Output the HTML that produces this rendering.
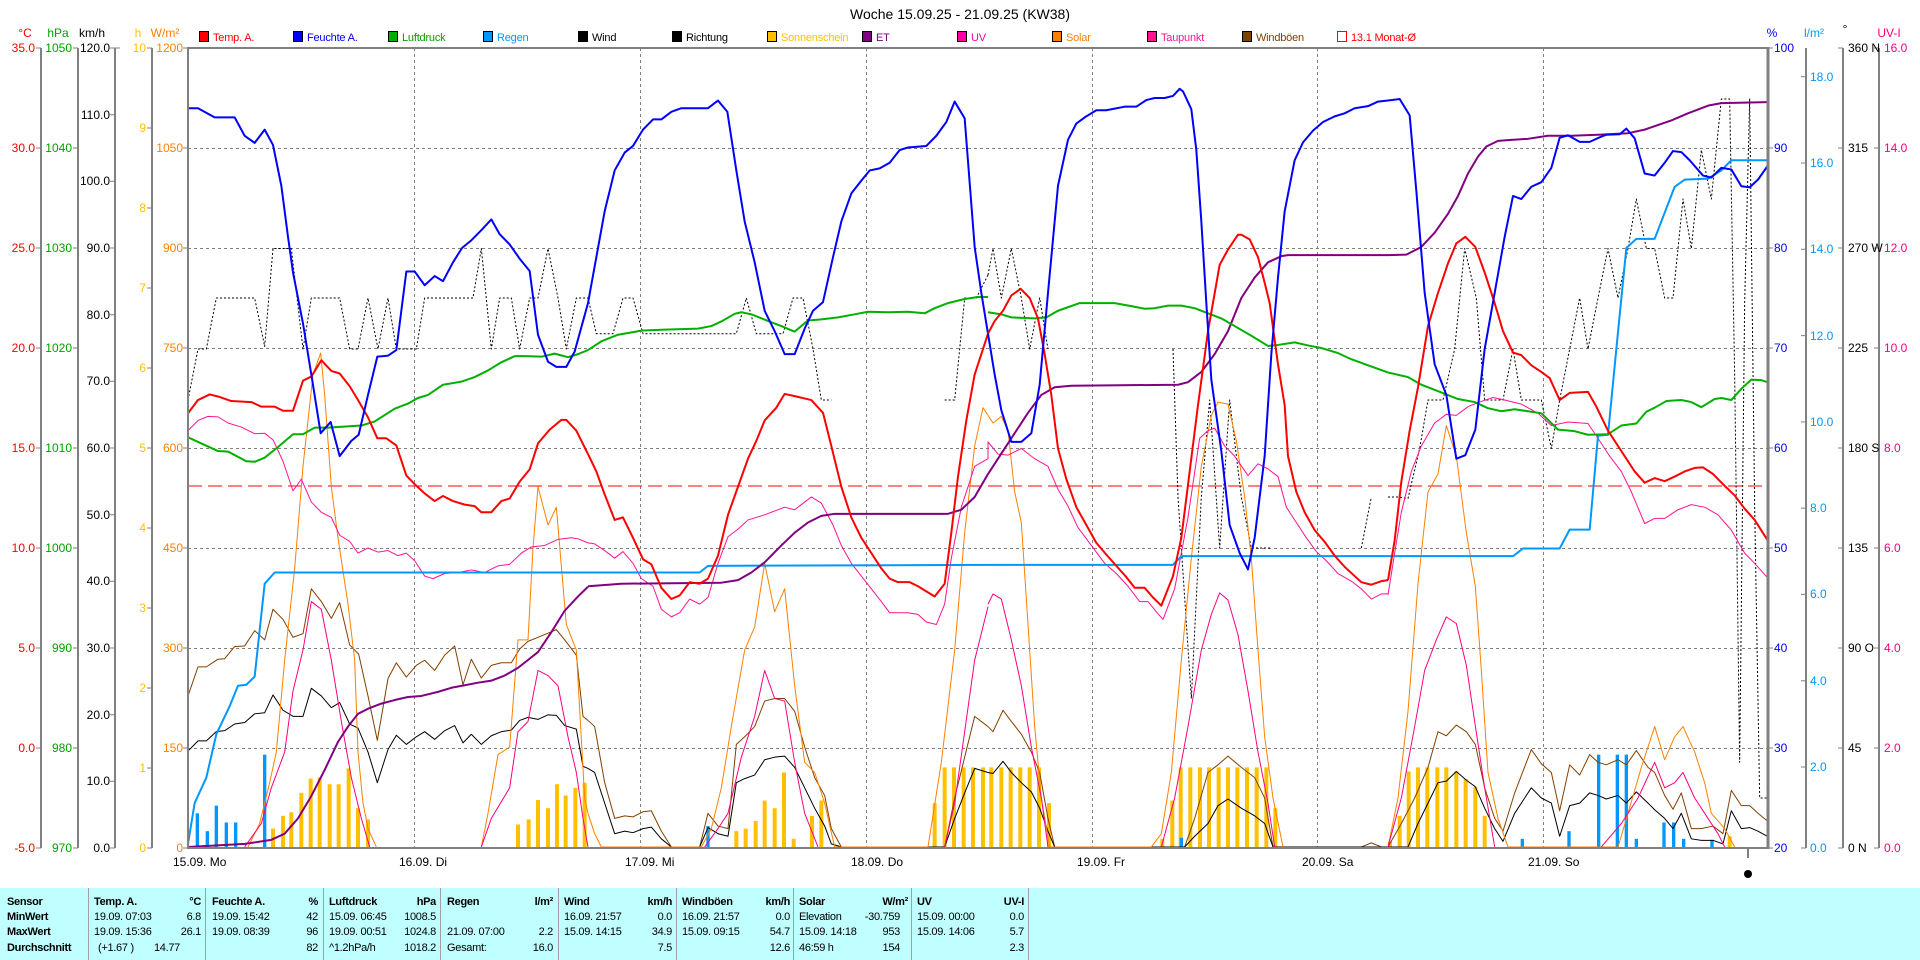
<!DOCTYPE html>
<html><head><meta charset="utf-8"><style>
html,body{margin:0;padding:0;background:#fff;width:1920px;height:960px;overflow:hidden}
svg{display:block}
text{font-family:"Liberation Sans",sans-serif;font-size:12px}
.t{font-family:"Liberation Sans Narrow","Liberation Sans",sans-serif;font-size:11px;letter-spacing:-0.3px}
.lg text{font-size:11px;letter-spacing:-0.2px}
.b{font-weight:bold}
</style></head><body>
<svg width="1920" height="960" viewBox="0 0 1920 960" xmlns="http://www.w3.org/2000/svg">
<defs><clipPath id="pc"><rect x="188" y="48" width="1580" height="800"/></clipPath></defs>
<text x="960" y="19" text-anchor="middle" style="font-size:14px">Woche 15.09.25 - 21.09.25 (KW38)</text>
<!-- legend -->
<g class="lg">
<rect x="199.5" y="31.5" width="9" height="10" fill="#f00" stroke="#000"/><text x="213" y="41" fill="#f00">Temp. A.</text>
<rect x="293.5" y="31.5" width="9" height="10" fill="#00f" stroke="#000"/><text x="307" y="41" fill="#00f">Feuchte A.</text>
<rect x="388.5" y="31.5" width="9" height="10" fill="#00b000" stroke="#000"/><text x="402" y="41" fill="#00a000">Luftdruck</text>
<rect x="483.5" y="31.5" width="9" height="10" fill="#0098ff" stroke="#000"/><text x="497" y="41" fill="#0098ff">Regen</text>
<rect x="578.5" y="31.5" width="9" height="10" fill="#000" stroke="#000"/><text x="592" y="41">Wind</text>
<rect x="672.5" y="31.5" width="9" height="10" fill="#000" stroke="#000"/><text x="686" y="41">Richtung</text>
<rect x="767.5" y="31.5" width="9" height="10" fill="#ffc000" stroke="#000"/><text x="781" y="41" fill="#ffc000">Sonnenschein</text>
<rect x="862.5" y="31.5" width="9" height="10" fill="#800080" stroke="#000"/><text x="876" y="41" fill="#800080">ET</text>
<rect x="957.5" y="31.5" width="9" height="10" fill="#ff00a0" stroke="#000"/><text x="971" y="41" fill="#ff00a0">UV</text>
<rect x="1052.5" y="31.5" width="9" height="10" fill="#ff8000" stroke="#000"/><text x="1066" y="41" fill="#ff8000">Solar</text>
<rect x="1147.5" y="31.5" width="9" height="10" fill="#ff1493" stroke="#000"/><text x="1161" y="41" fill="#ff1493">Taupunkt</text>
<rect x="1242.5" y="31.5" width="9" height="10" fill="#804000" stroke="#000"/><text x="1256" y="41" fill="#804000">Windböen</text>
<rect x="1337.5" y="31.5" width="9" height="10" fill="#fff" stroke="#f00"/><text x="1351" y="41" fill="#f00">13.1 Monat-Ø</text>
</g>
<!-- unit headers -->
<text x="25" y="37" fill="#f00" text-anchor="middle">°C</text>
<text x="58" y="37" fill="#00a000" text-anchor="middle">hPa</text>
<text x="92" y="37" text-anchor="middle">km/h</text>
<text x="138" y="37" fill="#ffc000" text-anchor="middle">h</text>
<text x="165" y="37" fill="#ff8000" text-anchor="middle">W/m²</text>
<text x="1772" y="37" fill="#00f" text-anchor="middle">%</text>
<text x="1814" y="37" fill="#0098ff" text-anchor="middle">l/m²</text>
<text x="1845" y="33" text-anchor="middle">°</text>
<text x="1889" y="37" fill="#ff0080" text-anchor="middle">UV-I</text>
<!-- axis lines -->
<g stroke="#808080" stroke-width="2">
<line x1="41" y1="48" x2="41" y2="848"/><line x1="78" y1="48" x2="78" y2="848"/>
<line x1="115" y1="48" x2="115" y2="848"/><line x1="152" y1="48" x2="152" y2="848"/>
<line x1="1806" y1="48" x2="1806" y2="848"/><line x1="1843" y1="48" x2="1843" y2="848"/><line x1="1879" y1="48" x2="1879" y2="848"/>
</g>
<g stroke="#808080" stroke-width="1">
<path d="M36 48h5M36 148h5M36 248h5M36 348h5M36 448h5M36 548h5M36 648h5M36 748h5M36 848h5"/>
<path d="M73 48h5M73 148h5M73 248h5M73 348h5M73 448h5M73 548h5M73 648h5M73 748h5M73 848h5"/>
<path d="M110 48h10M110 114.7h5M110 181.3h5M110 248h5M110 314.7h5M110 381.3h5M110 448h5M110 514.7h5M110 581.3h5M110 648h5M110 714.7h5M110 781.3h5M110 848h5"/>
<path d="M147 48h5M147 128h5M147 208h5M147 288h5M147 368h5M147 448h5M147 528h5M147 608h5M147 688h5M147 768h5M147 848h5"/>
<path d="M183 48h5M183 148h5M183 248h5M183 348h5M183 448h5M183 548h5M183 648h5M183 748h5M183 848h5"/>
<path d="M1768 48h5M1768 148h5M1768 248h5M1768 348h5M1768 448h5M1768 548h5M1768 648h5M1768 748h5M1768 848h5"/>
<path d="M1801 76.7h5M1801 163h5M1801 249.3h5M1801 335.6h5M1801 421.9h5M1801 508.1h5M1801 594.4h5M1801 680.7h5M1801 767h5M1801 848h5"/>
<path d="M1838 48h5M1838 148h5M1838 248h5M1838 348h5M1838 448h5M1838 548h5M1838 648h5M1838 748h5M1838 848h5"/>
<path d="M1874 48h5M1874 148h5M1874 248h5M1874 348h5M1874 448h5M1874 548h5M1874 648h5M1874 748h5M1874 848h5"/>
</g>
<!-- left labels -->
<g fill="#f00" text-anchor="end">
<text x="35" y="52">35.0</text><text x="35" y="152">30.0</text><text x="35" y="252">25.0</text><text x="35" y="352">20.0</text><text x="35" y="452">15.0</text><text x="35" y="552">10.0</text><text x="35" y="652">5.0</text><text x="35" y="752">0.0</text><text x="35" y="852">-5.0</text>
</g>
<g fill="#00a000" text-anchor="end">
<text x="72" y="52">1050</text><text x="72" y="152">1040</text><text x="72" y="252">1030</text><text x="72" y="352">1020</text><text x="72" y="452">1010</text><text x="72" y="552">1000</text><text x="72" y="652">990</text><text x="72" y="752">980</text><text x="72" y="852">970</text>
</g>
<g fill="#000" text-anchor="end">
<text x="110" y="52">120.0</text><text x="110" y="119">110.0</text><text x="110" y="185">100.0</text><text x="110" y="252">90.0</text><text x="110" y="319">80.0</text><text x="110" y="385">70.0</text><text x="110" y="452">60.0</text><text x="110" y="519">50.0</text><text x="110" y="585">40.0</text><text x="110" y="652">30.0</text><text x="110" y="719">20.0</text><text x="110" y="785">10.0</text><text x="110" y="852">0.0</text>
</g>
<g fill="#ffc000" text-anchor="end">
<text x="146" y="52">10</text><text x="146" y="132">9</text><text x="146" y="212">8</text><text x="146" y="292">7</text><text x="146" y="372">6</text><text x="146" y="452">5</text><text x="146" y="532">4</text><text x="146" y="612">3</text><text x="146" y="692">2</text><text x="146" y="772">1</text><text x="146" y="852">0</text>
</g>
<g fill="#ff8000" text-anchor="end">
<text x="183" y="52">1200</text><text x="183" y="152">1050</text><text x="183" y="252">900</text><text x="183" y="352">750</text><text x="183" y="452">600</text><text x="183" y="552">450</text><text x="183" y="652">300</text><text x="183" y="752">150</text><text x="183" y="852">0</text>
</g>
<!-- right labels -->
<g fill="#00f">
<text x="1774" y="52">100</text><text x="1774" y="152">90</text><text x="1774" y="252">80</text><text x="1774" y="352">70</text><text x="1774" y="452">60</text><text x="1774" y="552">50</text><text x="1774" y="652">40</text><text x="1774" y="752">30</text><text x="1774" y="852">20</text>
</g>
<g fill="#0098ff">
<text x="1810" y="81">18.0</text><text x="1810" y="167">16.0</text><text x="1810" y="253">14.0</text><text x="1810" y="340">12.0</text><text x="1810" y="426">10.0</text><text x="1810" y="512">8.0</text><text x="1810" y="598">6.0</text><text x="1810" y="685">4.0</text><text x="1810" y="771">2.0</text><text x="1810" y="852">0.0</text>
</g>
<g fill="#000">
<text x="1848" y="52">360 N</text><text x="1848" y="152">315</text><text x="1848" y="252">270 W</text><text x="1848" y="352">225</text><text x="1848" y="452">180 S</text><text x="1848" y="552">135</text><text x="1848" y="652">90 O</text><text x="1848" y="752">45</text><text x="1848" y="852">0 N</text>
</g>
<g fill="#ff0080">
<text x="1884" y="52">16.0</text><text x="1884" y="152">14.0</text><text x="1884" y="252">12.0</text><text x="1884" y="352">10.0</text><text x="1884" y="452">8.0</text><text x="1884" y="552">6.0</text><text x="1884" y="652">4.0</text><text x="1884" y="752">2.0</text><text x="1884" y="852">0.0</text>
</g>
<!-- grid -->
<g stroke="#808080" stroke-width="1" stroke-dasharray="3,3">
<path d="M188 148.5H1768M188 248.5H1768M188 348.5H1768M188 448.5H1768M188 548.5H1768M188 648.5H1768M188 748.5H1768"/>
<path d="M414.5 48V848M640.5 48V848M866.5 48V848M1092.5 48V848M1317.5 48V848M1543.5 48V848"/>
</g>
<line x1="188" y1="486" x2="1762" y2="486" stroke="#f00" stroke-width="1" stroke-dasharray="14,6"/>
<!-- date labels -->
<g fill="#000">
<text x="173" y="866">15.09.  Mo</text><text x="399" y="866">16.09.  Di</text><text x="625" y="866">17.09.  Mi</text><text x="851" y="866">18.09.  Do</text><text x="1077" y="866">19.09.  Fr</text><text x="1302" y="866">20.09.  Sa</text><text x="1528" y="866">21.09.  So</text>
</g>
<line x1="1748" y1="848" x2="1748" y2="858" stroke="#000"/>
<circle cx="1748" cy="874" r="4" fill="#000"/>

<g clip-path="url(#pc)" fill="none" stroke-linejoin="round">
<!-- G1 x0=188 -->
<g transform="translate(188,48) scale(0.33333,0.5102)">
<g fill="#ffc000" stroke="none">
<rect x="249" y="1530" width="12" height="40"/><rect x="279" y="1505" width="12" height="65"/><rect x="304" y="1498" width="12" height="72"/><rect x="334" y="1460" width="12" height="110"/><rect x="362" y="1432" width="12" height="138"/><rect x="389" y="1430" width="12" height="140"/><rect x="419" y="1443" width="12" height="127"/><rect x="446" y="1443" width="12" height="127"/><rect x="476" y="1412" width="12" height="158"/><rect x="504" y="1490" width="12" height="80"/><rect x="534" y="1512" width="12" height="58"/>
<rect x="984" y="1522" width="12" height="48"/><rect x="1016" y="1512" width="12" height="58"/><rect x="1044" y="1474" width="12" height="96"/><rect x="1074" y="1490" width="12" height="80"/><rect x="1101" y="1443" width="12" height="127"/><rect x="1127" y="1465" width="12" height="105"/><rect x="1156" y="1450" width="12" height="120"/><rect x="1184" y="1440" width="12" height="130"/>
</g>
<g fill="#0098ff" stroke="none">
<rect x="23" y="1500" width="10" height="70"/><rect x="53" y="1535" width="10" height="35"/><rect x="80" y="1485" width="10" height="85"/><rect x="110" y="1518" width="10" height="52"/><rect x="138" y="1518" width="10" height="52"/><rect x="225" y="1385" width="10" height="185"/>
</g>
<polyline vector-effect="non-scaling-stroke" stroke="#000" stroke-width="1" stroke-dasharray="2,2" points="0,690 30,590 55,590 85,490 200,490 230,585 255,393 310,393 345,590 370,490 455,490 485,590 510,590 540,490 570,590 600,490 625,590 685,590 710,490 855,490 880,393 910,590 935,490 970,490 995,590 1025,490 1050,490 1080,393 1110,490 1135,590 1165,490 1200,490"/>
<polyline vector-effect="non-scaling-stroke" stroke="#804000" stroke-width="1" points="0,1270 30,1213 55,1213 90,1198 110,1197 140,1173 170,1172 200,1142 230,1160 255,1100 285,1120 315,1155 345,1148 370,1060 400,1085 430,1118 455,1087 485,1170 512,1188 540,1270 568,1357 600,1236 625,1205 655,1233 685,1210 710,1200 740,1220 770,1190 800,1172 825,1248 850,1198 880,1235 910,1210 940,1205 970,1205 995,1178 1020,1163 1050,1155 1080,1147 1105,1140 1130,1160 1165,1190 1185,1310 1200,1318"/>
<polyline vector-effect="non-scaling-stroke" stroke="#000" stroke-width="1" points="0,1378 30,1358 55,1358 85,1340 110,1338 140,1325 170,1322 200,1305 230,1303 255,1268 285,1298 315,1310 345,1310 370,1255 400,1270 430,1293 455,1283 485,1325 510,1333 540,1380 568,1440 600,1375 625,1347 655,1365 685,1350 710,1340 740,1355 770,1338 800,1328 825,1362 850,1345 880,1365 910,1348 940,1340 970,1337 995,1318 1020,1312 1050,1316 1080,1307 1105,1308 1130,1328 1165,1335 1185,1408 1200,1412"/>
<polyline vector-effect="non-scaling-stroke" stroke="#ff8000" stroke-width="1" points="180,1566 215,1520 245,1440 265,1380 290,1200 320,1020 345,820 375,640 398,598 410,680 430,860 450,960 480,1090 500,1200 510,1380 525,1480 540,1530 565,1566"/>
<polyline vector-effect="non-scaling-stroke" stroke="#ff8000" stroke-width="1" points="880,1566 900,1500 930,1385 965,1370 990,1160 1020,1160 1035,980 1050,860 1080,935 1105,900 1135,1130 1165,1180 1190,1470 1200,1500"/>
<polyline vector-effect="non-scaling-stroke" stroke="#ff0080" stroke-width="1" points="170,1566 220,1520 250,1450 290,1380 315,1260 345,1180 370,1085 400,1100 430,1200 460,1320 490,1430 520,1510 545,1566"/>
<polyline vector-effect="non-scaling-stroke" stroke="#ff0080" stroke-width="1" points="880,1566 910,1510 965,1450 990,1340 1020,1320 1050,1220 1080,1230 1110,1250 1140,1350 1165,1420 1185,1510 1200,1566"/>
<polyline vector-effect="non-scaling-stroke" stroke="#ff1493" stroke-width="1" points="0,750 30,730 60,722 90,723 120,735 160,743 200,756 230,755 255,768 285,810 315,868 340,845 370,890 400,910 430,920 455,955 485,967 510,990 540,980 570,988 600,985 630,995 655,990 680,1005 710,1035 735,1040 770,1030 810,1028 850,1023 890,1028 930,1015 965,1012 1000,990 1030,978 1070,975 1110,963 1150,960 1170,962 1200,970"/>
<polyline vector-effect="non-scaling-stroke" stroke="#0098ff" stroke-width="2" points="0,1560 20,1480 55,1430 85,1345 125,1290 150,1250 175,1248 200,1232 230,1050 260,1028 1200,1028"/>
<polyline vector-effect="non-scaling-stroke" stroke="#800080" stroke-width="2" points="0,1566 170,1560 250,1552 290,1540 330,1510 370,1466 410,1415 450,1360 480,1330 510,1305 540,1295 580,1285 620,1278 660,1272 700,1270 750,1262 790,1254 830,1249 870,1244 910,1240 950,1230 990,1215 1050,1184 1090,1145 1130,1103 1170,1075 1200,1056"/>
<polyline vector-effect="non-scaling-stroke" stroke="#00b000" stroke-width="2" points="0,763 40,775 90,790 120,791 175,810 200,811 230,803 270,782 315,757 345,757 380,744 420,744 520,740 560,732 620,707 660,697 690,686 720,680 765,660 820,654 860,645 900,632 940,616 980,604 1010,604 1060,605 1100,599 1140,606 1170,600 1200,592"/>
<polyline vector-effect="non-scaling-stroke" stroke="#f00" stroke-width="2" points="0,716 30,690 65,679 90,683 130,692 190,694 220,703 260,703 285,711 315,711 345,652 370,644 400,612 430,633 455,638 485,663 510,690 540,724 568,765 595,765 625,779 655,838 680,855 710,873 740,888 765,878 795,888 830,895 860,898 880,910 910,910 940,888 965,883 995,850 1025,826 1050,775 1085,748 1120,729 1135,729 1165,750 1200,796"/>
<polyline vector-effect="non-scaling-stroke" stroke="#00f" stroke-width="2" points="0,118 30,118 80,136 140,136 170,172 200,186 230,160 255,190 280,270 300,370 315,440 345,540 370,640 398,755 428,733 455,800 490,770 512,758 540,680 568,605 600,603 625,592 655,438 680,438 710,465 740,447 765,457 795,420 822,392 850,377 880,357 910,336 935,365 965,385 995,413 1025,437 1050,562 1080,615 1105,625 1135,625 1160,595 1200,500"/>
</g>
<!-- G2 x0=588 -->
<g transform="translate(588,48) scale(0.33333,0.5102)">
<g fill="#ffc000" stroke="none">
<rect x="439" y="1535" width="12" height="35"/><rect x="467" y="1530" width="12" height="40"/><rect x="497" y="1515" width="12" height="55"/><rect x="524" y="1475" width="12" height="95"/><rect x="554" y="1490" width="12" height="80"/><rect x="582" y="1420" width="12" height="150"/><rect x="611" y="1550" width="12" height="20"/><rect x="666" y="1505" width="12" height="65"/><rect x="694" y="1475" width="12" height="95"/>
<rect x="1034" y="1480" width="12" height="90"/><rect x="1064" y="1410" width="12" height="160"/><rect x="1092" y="1410" width="12" height="160"/><rect x="1121" y="1410" width="12" height="160"/><rect x="1149" y="1410" width="12" height="160"/><rect x="1179" y="1410" width="12" height="160"/>
</g>
<rect x="355" y="1525" width="10" height="45" fill="#0098ff" stroke="none"/>
<polyline vector-effect="non-scaling-stroke" stroke="#000" stroke-width="1" stroke-dasharray="2,2" points="0,490 25,560 75,560 105,490 135,490 165,560 445,560 475,490 505,560 585,560 615,490 645,490 675,590 700,690 730,690"/>
<polyline vector-effect="non-scaling-stroke" stroke="#000" stroke-width="1" stroke-dasharray="2,2" points="1070,690 1100,690 1130,490 1165,490 1200,445"/>
<polyline vector-effect="non-scaling-stroke" stroke="#804000" stroke-width="1" points="0,1318 20,1330 50,1440 80,1510 110,1505 135,1507 165,1497 190,1495 220,1535 250,1566 335,1566 360,1500 390,1525 420,1530 445,1365 470,1350 500,1330 530,1280 560,1275 590,1275 620,1300 650,1370 680,1430 710,1465 730,1530 760,1566 1070,1566 1100,1470 1130,1390 1160,1310 1200,1330"/>
<polyline vector-effect="non-scaling-stroke" stroke="#000" stroke-width="1" points="0,1412 20,1420 50,1480 80,1540 110,1535 135,1538 165,1530 190,1527 220,1550 250,1566 335,1566 360,1528 390,1540 420,1545 445,1440 470,1432 500,1425 530,1395 560,1390 590,1388 620,1410 650,1450 680,1490 710,1525 730,1560 760,1566 1070,1566 1100,1510 1130,1460 1160,1412 1200,1420"/>
<polyline vector-effect="non-scaling-stroke" stroke="#ff8000" stroke-width="1" points="0,1500 20,1540 40,1566 340,1566 370,1530 400,1450 430,1330 470,1180 500,1135 530,1010 560,1105 590,1060 620,1250 650,1400 680,1420 710,1480 740,1566 1020,1566 1060,1400 1100,1180 1130,950 1160,780 1185,705 1200,720"/>
<polyline vector-effect="non-scaling-stroke" stroke="#ff0080" stroke-width="1" points="350,1566 390,1530 420,1500 460,1390 500,1310 530,1220 560,1275 590,1280 620,1400 650,1500 690,1566"/>
<polyline vector-effect="non-scaling-stroke" stroke="#ff0080" stroke-width="1" points="1070,1566 1100,1480 1160,1200 1200,1095"/>
<polyline vector-effect="non-scaling-stroke" stroke="#ff1493" stroke-width="1" points="0,970 20,972 50,985 80,1000 105,987 135,1010 160,1040 195,1055 220,1100 250,1115 275,1107 305,1080 335,1090 360,1077 390,1010 420,958 450,943 480,925 530,915 590,900 620,905 650,890 670,880 700,892 735,935 760,975 790,1010 820,1035 850,1060 880,1085 905,1107 960,1107 990,1110 1015,1125 1045,1130 1070,1090 1090,1000 1120,900 1160,820 1200,805"/>
<polyline vector-effect="non-scaling-stroke" stroke="#0098ff" stroke-width="2" points="0,1028 335,1028 360,1015 1200,1013"/>
<polyline vector-effect="non-scaling-stroke" stroke="#800080" stroke-width="2" points="0,1055 100,1050 400,1048 450,1043 490,1028 530,1008 580,975 620,950 660,930 700,917 740,913 1080,913 1120,905 1160,880 1200,835"/>
<polyline vector-effect="non-scaling-stroke" stroke="#00b000" stroke-width="2" points="0,592 40,575 90,562 160,554 230,552 330,550 370,545 400,536 440,521 460,518 490,522 540,535 580,545 620,556 660,534 700,532 750,528 800,522 840,517 900,518 960,517 1010,520 1040,510 1080,500 1130,492 1170,488 1200,488"/>
<polyline vector-effect="non-scaling-stroke" stroke="#f00" stroke-width="2" points="0,796 25,830 50,875 80,925 105,920 135,960 165,1002 190,1012 220,1058 250,1080 275,1073 305,1047 335,1050 360,1040 390,995 420,915 450,860 480,805 505,770 530,730 565,705 590,678 625,683 670,690 705,715 730,780 760,860 790,920 820,960 850,990 880,1020 905,1040 930,1047 965,1047 990,1055 1015,1065 1040,1075 1070,1050 1090,950 1110,840 1135,730 1160,640 1200,560"/>
<polyline vector-effect="non-scaling-stroke" stroke="#00f" stroke-width="2" points="0,500 25,410 50,320 80,240 110,205 135,192 165,160 195,140 220,140 250,125 280,118 360,118 390,103 418,125 445,240 470,340 500,420 530,515 560,555 590,600 620,600 650,550 675,515 705,498 735,410 760,340 790,285 820,260 845,240 875,236 905,225 935,200 960,195 1015,192 1045,172 1075,145 1100,105 1130,138 1160,390 1180,480 1200,560"/>
</g>
<!-- G3 x0=988 -->
<g transform="translate(988,48) scale(0.33333,0.5102)">
<g fill="#ffc000" stroke="none">
<rect x="4" y="1410" width="12" height="160"/><rect x="34" y="1410" width="12" height="160"/><rect x="62" y="1410" width="12" height="160"/><rect x="91" y="1410" width="12" height="160"/><rect x="119" y="1410" width="12" height="160"/><rect x="147" y="1410" width="12" height="160"/><rect x="177" y="1480" width="12" height="90"/>
<rect x="517" y="1550" width="12" height="20"/><rect x="547" y="1475" width="12" height="95"/><rect x="572" y="1410" width="12" height="160"/><rect x="601" y="1410" width="12" height="160"/><rect x="630" y="1410" width="12" height="160"/><rect x="657" y="1410" width="12" height="160"/><rect x="686" y="1410" width="12" height="160"/><rect x="714" y="1410" width="12" height="160"/><rect x="742" y="1410" width="12" height="160"/><rect x="771" y="1410" width="12" height="160"/><rect x="800" y="1410" width="12" height="160"/><rect x="829" y="1410" width="12" height="160"/><rect x="856" y="1490" width="12" height="80"/>
</g>
<rect x="575" y="1548" width="10" height="22" fill="#0098ff" stroke="none"/>
<polyline vector-effect="non-scaling-stroke" stroke="#000" stroke-width="1" stroke-dasharray="2,2" points="0,445 15,393 40,490 70,393 100,490 125,590 155,490 180,590"/>
<polyline vector-effect="non-scaling-stroke" stroke="#000" stroke-width="1" stroke-dasharray="2,2" points="555,590 570,880 610,1275 640,880 665,690 695,980 725,690 760,880 790,980 850,980"/>
<polyline vector-effect="non-scaling-stroke" stroke="#000" stroke-width="1" stroke-dasharray="2,2" points="1120,980 1150,880"/>
<polyline vector-effect="non-scaling-stroke" stroke="#804000" stroke-width="1" points="0,1330 15,1340 45,1298 70,1320 100,1345 130,1380 155,1420 180,1510 200,1566 590,1566 620,1510 660,1420 690,1405 720,1388 760,1410 800,1430 830,1470 855,1566 1120,1566 1150,1558 1180,1566 1200,1566"/>
<polyline vector-effect="non-scaling-stroke" stroke="#000" stroke-width="1" points="0,1420 15,1422 45,1398 70,1420 100,1440 130,1458 155,1490 180,1535 200,1566 590,1566 620,1545 660,1520 690,1485 720,1472 760,1490 800,1505 830,1520 855,1566 1200,1566"/>
<polyline vector-effect="non-scaling-stroke" stroke="#ff8000" stroke-width="1" points="0,720 15,735 40,722 60,750 80,870 100,930 120,1130 140,1330 160,1470 185,1566 490,1566 520,1540 550,1420 580,1200 610,1000 640,820 670,720 690,694 720,698 745,770 770,880 790,1000 810,1180 830,1350 855,1470 885,1566"/>
<polyline vector-effect="non-scaling-stroke" stroke="#ff0080" stroke-width="1" points="0,1090 15,1070 40,1080 70,1160 100,1250 130,1370 160,1470 180,1566"/>
<polyline vector-effect="non-scaling-stroke" stroke="#ff0080" stroke-width="1" points="520,1566 560,1470 600,1330 640,1180 670,1110 695,1068 720,1082 750,1150 780,1260 810,1380 840,1480 860,1566"/>
<polyline vector-effect="non-scaling-stroke" stroke="#ff1493" stroke-width="1" points="0,805 0,772 30,796 60,798 100,785 140,805 180,820 210,865 240,898 270,940 310,975 350,1010 385,1030 420,1055 455,1085 480,1085 505,1105 525,1120 560,1060 600,920 635,765 660,750 680,745 710,780 740,800 780,838 810,815 840,825 870,840 895,900 925,930 955,960 985,987 1015,1005 1050,1030 1090,1045 1120,1060 1150,1080 1180,1070 1200,1070"/>
<polyline vector-effect="non-scaling-stroke" stroke="#0098ff" stroke-width="2" points="0,1013 555,1013 580,996 1200,996"/>
<polyline vector-effect="non-scaling-stroke" stroke="#800080" stroke-width="2" points="0,835 40,795 80,755 120,715 160,680 200,665 250,662 570,660 600,655 640,635 680,600 720,555 760,490 800,450 840,420 880,408 900,406 1200,406"/>
<polyline vector-effect="non-scaling-stroke" stroke="#00b000" stroke-width="2" points="0,518 40,522 70,528 140,530 175,528 210,515 275,500 380,500 430,506 470,511 500,510 540,505 580,505 620,510 660,520 700,530 740,545 790,564 840,584 870,582 920,577 960,583 1000,588 1050,598 1090,610 1140,622 1200,636"/>
<polyline vector-effect="non-scaling-stroke" stroke="#f00" stroke-width="2" points="0,560 20,535 45,515 70,485 98,472 125,490 150,530 170,600 190,680 210,785 235,845 265,900 295,935 325,970 355,993 385,1015 415,1037 440,1058 470,1058 495,1077 520,1093 555,1035 580,960 605,830 630,700 660,555 695,425 720,395 750,366 760,366 785,375 810,410 830,460 845,500 870,620 890,700 900,800 925,870 950,910 980,945 1010,968 1040,995 1070,1017 1100,1035 1120,1047 1150,1052 1180,1045 1200,1043"/>
<polyline vector-effect="non-scaling-stroke" stroke="#00f" stroke-width="2" points="0,560 20,640 40,710 70,772 100,772 130,755 155,660 180,480 210,270 240,180 265,148 290,136 325,122 355,122 410,115 445,115 475,102 500,98 530,98 555,94 575,80 585,85 610,120 625,200 640,340 655,500 670,650 700,790 725,935 755,990 780,1022 800,960 830,800 850,600 870,450 890,320 920,220 945,185 975,162 1005,145 1040,134 1070,128 1100,118 1140,114 1170,105 1200,103"/>
</g>
<!-- G4 x0=1388 -->
<g transform="translate(1388,48) scale(0.33333,0.5102)">
<g fill="#ffc000" stroke="none">
<rect x="0" y="1555" width="12" height="15"/><rect x="29" y="1505" width="12" height="65"/><rect x="56" y="1418" width="12" height="152"/><rect x="84" y="1410" width="12" height="160"/><rect x="112" y="1410" width="12" height="160"/><rect x="142" y="1410" width="12" height="160"/><rect x="169" y="1410" width="12" height="160"/><rect x="199" y="1418" width="12" height="152"/><rect x="227" y="1433" width="12" height="137"/><rect x="256" y="1448" width="12" height="122"/><rect x="284" y="1505" width="12" height="65"/><rect x="1019" y="1545" width="12" height="25"/>
</g>
<g fill="#0098ff" stroke="none">
<rect x="398" y="1550" width="10" height="20"/><rect x="538" y="1535" width="10" height="35"/><rect x="627" y="1385" width="10" height="185"/><rect x="683" y="1385" width="10" height="185"/><rect x="710" y="1385" width="10" height="185"/><rect x="740" y="1550" width="10" height="20"/><rect x="823" y="1518" width="10" height="52"/><rect x="852" y="1518" width="10" height="52"/><rect x="882" y="1550" width="10" height="20"/><rect x="967" y="1552" width="10" height="18"/>
</g>
<polyline vector-effect="non-scaling-stroke" stroke="#000" stroke-width="1" stroke-dasharray="2,2" points="0,880 30,880 60,883 95,785 120,690 165,690 200,590 230,393 265,490 290,690 345,690 375,590 400,690 460,690 490,785 515,690 545,590 575,490 600,590 630,490 660,393 690,490 720,393 745,296 775,393 800,393 830,490 855,490 885,296 910,393 940,200 970,296 1000,100 1025,100 1040,640 1055,1400 1070,500 1085,100 1100,900 1115,1470 1138,1470"/>
<polyline vector-effect="non-scaling-stroke" stroke="#804000" stroke-width="1" points="0,1566 40,1520 80,1470 120,1410 150,1340 175,1348 205,1327 235,1340 262,1365 290,1450 320,1510 345,1535 380,1460 430,1375 460,1403 490,1420 515,1495 545,1405 575,1425 605,1385 630,1400 655,1405 690,1395 715,1405 745,1377 780,1410 800,1420 830,1465 855,1492 880,1460 910,1530 940,1530 975,1525 1005,1540 1030,1455 1060,1485 1085,1485 1110,1500 1138,1515"/>
<polyline vector-effect="non-scaling-stroke" stroke="#000" stroke-width="1" points="0,1566 60,1566 90,1520 120,1480 150,1440 175,1437 205,1418 235,1435 262,1448 290,1490 320,1530 345,1555 380,1500 430,1450 460,1470 490,1480 515,1545 545,1485 575,1480 605,1460 630,1465 655,1472 690,1465 715,1480 745,1458 780,1480 800,1493 830,1510 855,1530 880,1500 910,1550 940,1553 975,1553 1005,1560 1030,1495 1060,1530 1085,1528 1110,1535 1138,1545"/>
<polyline vector-effect="non-scaling-stroke" stroke="#ff8000" stroke-width="1" points="0,1566 30,1470 60,1300 90,1050 120,870 150,835 175,740 205,800 235,950 262,1055 280,1220 300,1420 330,1510 360,1566 690,1566 720,1500 760,1410 800,1330 830,1395 860,1350 885,1330 920,1380 950,1440 970,1500 1010,1530 1040,1566"/>
<polyline vector-effect="non-scaling-stroke" stroke="#ff0080" stroke-width="1" points="0,1566 40,1470 80,1330 110,1220 145,1160 175,1115 205,1128 235,1210 260,1320 290,1450 320,1566"/>
<polyline vector-effect="non-scaling-stroke" stroke="#ff0080" stroke-width="1" points="640,1566 700,1520 750,1470 800,1400 830,1450 860,1440 885,1420 920,1470 950,1500 990,1540 1010,1566"/>
<polyline vector-effect="non-scaling-stroke" stroke="#ff1493" stroke-width="1" points="0,1072 20,990 40,910 70,830 100,780 140,735 175,718 205,720 240,703 270,695 315,685 350,690 400,698 450,716 490,740 540,733 600,736 635,770 665,800 700,830 730,870 770,932 800,922 830,922 870,905 910,895 950,900 990,915 1030,945 1070,990 1100,1010 1138,1038"/>
<polyline vector-effect="non-scaling-stroke" stroke="#0098ff" stroke-width="2" points="0,996 375,996 405,981 515,981 545,944 605,944 630,760 660,758 685,590 715,392 745,374 800,374 860,272 890,258 960,256 1000,240 1030,220 1138,220"/>
<polyline vector-effect="non-scaling-stroke" stroke="#800080" stroke-width="2" points="0,406 55,405 100,390 140,362 180,325 210,290 240,246 270,213 295,193 330,182 370,180 420,178 480,172 550,172 630,170 720,167 770,160 850,142 900,128 960,113 1000,108 1138,106"/>
<polyline vector-effect="non-scaling-stroke" stroke="#00b000" stroke-width="2" points="0,636 60,645 100,660 160,675 210,688 260,694 300,706 340,712 380,708 420,712 460,716 510,748 560,751 600,758 660,757 700,740 745,736 775,713 800,705 835,692 880,690 910,694 940,704 980,688 1000,686 1030,690 1060,668 1090,650 1120,651 1138,655"/>
<polyline vector-effect="non-scaling-stroke" stroke="#f00" stroke-width="2" points="0,1043 20,965 40,850 65,750 90,665 120,545 150,480 180,422 205,383 232,370 262,390 290,440 320,500 345,555 375,597 400,602 430,622 460,635 485,647 515,690 545,676 600,674 625,703 660,750 700,790 740,830 770,852 800,843 830,849 860,840 890,830 920,823 945,822 975,835 1005,855 1040,877 1070,903 1100,925 1138,964"/>
<polyline vector-effect="non-scaling-stroke" stroke="#00f" stroke-width="2" points="0,103 35,100 65,132 85,280 110,480 140,620 175,680 205,805 232,798 262,748 290,590 320,480 350,370 375,290 400,296 430,272 460,263 490,235 515,176 540,171 575,184 605,184 635,175 655,170 695,169 715,158 740,177 770,246 800,250 830,225 855,202 880,204 905,220 945,250 970,254 1000,235 1030,238 1060,271 1085,273 1110,258 1138,232"/>
</g>
</g>
<!-- plot border -->
<g stroke="#808080">
<line x1="187" y1="48" x2="1769" y2="48" stroke-width="2"/>
<line x1="188" y1="47" x2="188" y2="849" stroke-width="2"/>
<line x1="1768" y1="47" x2="1768" y2="849" stroke-width="3"/>
<line x1="187" y1="848" x2="1769" y2="848" stroke-width="2"/>
</g>
<!-- table -->
<rect x="0" y="888" width="1920" height="72" fill="#c0ffff"/>
<g stroke="#a0a0a0" stroke-width="1">
<path d="M88.5 888V960M205.5 888V960M323.5 888V960M440.5 888V960M558.5 888V960M676.5 888V960M793.5 888V960M911.5 888V960M1028.5 888V960"/>
</g>
<g class="t">
<text class="t b" x="7" y="905">Sensor</text><text class="t b" x="7" y="920">MinWert</text><text class="t b" x="7" y="935">MaxWert</text><text class="t b" x="7" y="951">Durchschnitt</text>
<text class="t b" x="94" y="905">Temp. A.</text><text class="t b" x="201" y="905" text-anchor="end">°C</text>
<text class="t" x="94" y="920">19.09.  07:03</text><text class="t" x="201" y="920" text-anchor="end">6.8</text>
<text class="t" x="94" y="935">19.09.  15:36</text><text class="t" x="201" y="935" text-anchor="end">26.1</text>
<text class="t" x="98" y="951">(+1.67 )</text><text class="t" x="180" y="951" text-anchor="end">14.77</text>
<text class="t b" x="212" y="905">Feuchte A.</text><text class="t b" x="318" y="905" text-anchor="end">%</text>
<text class="t" x="212" y="920">19.09.  15:42</text><text class="t" x="318" y="920" text-anchor="end">42</text>
<text class="t" x="212" y="935">19.09.  08:39</text><text class="t" x="318" y="935" text-anchor="end">96</text>
<text class="t" x="318" y="951" text-anchor="end">82</text>
<text class="t b" x="329" y="905">Luftdruck</text><text class="t b" x="436" y="905" text-anchor="end">hPa</text>
<text class="t" x="329" y="920">15.09.  06:45</text><text class="t" x="436" y="920" text-anchor="end">1008.5</text>
<text class="t" x="329" y="935">19.09.  00:51</text><text class="t" x="436" y="935" text-anchor="end">1024.8</text>
<text class="t" x="329" y="951">^1.2hPa/h</text><text class="t" x="436" y="951" text-anchor="end">1018.2</text>
<text class="t b" x="447" y="905">Regen</text><text class="t b" x="553" y="905" text-anchor="end">l/m²</text>
<text class="t" x="447" y="935">21.09.  07:00</text><text class="t" x="553" y="935" text-anchor="end">2.2</text>
<text class="t" x="447" y="951">Gesamt:</text><text class="t" x="553" y="951" text-anchor="end">16.0</text>
<text class="t b" x="564" y="905">Wind</text><text class="t b" x="672" y="905" text-anchor="end">km/h</text>
<text class="t" x="564" y="920">16.09.  21:57</text><text class="t" x="672" y="920" text-anchor="end">0.0</text>
<text class="t" x="564" y="935">15.09.  14:15</text><text class="t" x="672" y="935" text-anchor="end">34.9</text>
<text class="t" x="672" y="951" text-anchor="end">7.5</text>
<text class="t b" x="682" y="905">Windböen</text><text class="t b" x="790" y="905" text-anchor="end">km/h</text>
<text class="t" x="682" y="920">16.09.  21:57</text><text class="t" x="790" y="920" text-anchor="end">0.0</text>
<text class="t" x="682" y="935">15.09.  09:15</text><text class="t" x="790" y="935" text-anchor="end">54.7</text>
<text class="t" x="790" y="951" text-anchor="end">12.6</text>
<text class="t b" x="799" y="905">Solar</text><text class="t b" x="908" y="905" text-anchor="end">W/m²</text>
<text class="t" x="799" y="920">Elevation</text><text class="t" x="900" y="920" text-anchor="end">-30.759</text>
<text class="t" x="799" y="935">15.09.  14:18</text><text class="t" x="900" y="935" text-anchor="end">953</text>
<text class="t" x="799" y="951">46:59 h</text><text class="t" x="900" y="951" text-anchor="end">154</text>
<text class="t b" x="917" y="905">UV</text><text class="t b" x="1024" y="905" text-anchor="end">UV-I</text>
<text class="t" x="917" y="920">15.09.  00:00</text><text class="t" x="1024" y="920" text-anchor="end">0.0</text>
<text class="t" x="917" y="935">15.09.  14:06</text><text class="t" x="1024" y="935" text-anchor="end">5.7</text>
<text class="t" x="1024" y="951" text-anchor="end">2.3</text>
</g>
</svg>
</body></html>
